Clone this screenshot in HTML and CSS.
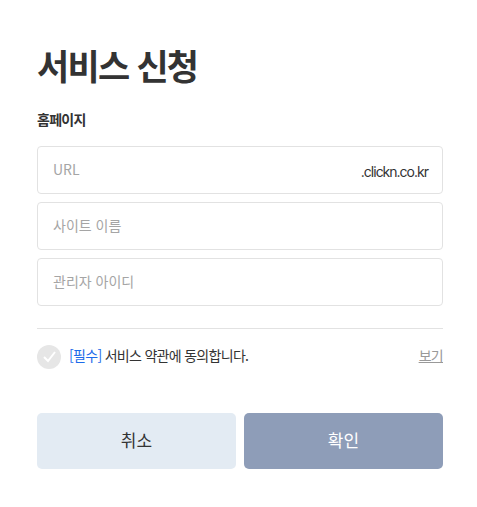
FILE: index.html
```html
<!DOCTYPE html>
<html lang="ko">
<head>
<meta charset="utf-8">
<meta name="viewport" content="width=device-width, initial-scale=1">
<title>서비스 신청</title>
<link rel="stylesheet" href="styles.css">
</head>
<body>
<main class="page">
  <h1 class="title">서비스 신청</h1>
  <form class="form">
    <h2 class="label">홈페이지</h2>
    <div class="fields">
      <label class="field">
        <input class="field-input" type="text" placeholder="URL" aria-label="URL">
        <span class="suffix">.clickn.co.kr</span>
      </label>
      <label class="field">
        <input class="field-input" type="text" placeholder="사이트 이름" aria-label="사이트 이름">
      </label>
      <label class="field">
        <input class="field-input" type="text" placeholder="관리자 아이디" aria-label="관리자 아이디">
      </label>
    </div>
    <div class="terms">
      <label class="agree">
        <span class="check">
          <input class="check-input" type="checkbox">
          <svg class="check-icon" viewBox="0 0 24 24" aria-hidden="true"><path d="M7 12l4 4 7-9"/></svg>
        </span>
        <span class="terms-text"><span class="required">[필수]</span> 서비스 약관에 동의합니다.</span>
      </label>
      <a class="view terms-text" href="#">보기</a>
    </div>
    <div class="actions">
      <button class="button cancel" type="button">취소</button>
      <button class="button confirm" type="submit">확인</button>
    </div>
  </form>
</main>
</body>
</html>
```
FILE: styles.css
```css
* {
  box-sizing: border-box;
}

body {
  margin: 0;
  background: #fff;
  color: #333;
  font-family: "Noto Sans CJK KR", sans-serif;
  font-size: 14px;
  letter-spacing: -0.05em;
}

.page {
  padding: 40px 34px 38px 37px;
}

.title {
  margin: 0 0 19px;
  font-size: 35px;
  line-height: 50px;
  letter-spacing: -0.05em;
}

.label {
  margin: 0 0 17px;
  font-size: 14px;
  line-height: 20px;
}

.fields {
  display: grid;
  gap: 8px;
}

.field {
  display: flex;
  align-items: center;
  height: 48px;
  padding: 0 14px 0 15px;
  border: 1px solid #e2e2e2;
  border-radius: 4px;
}

.field-input {
  flex: 1;
  min-width: 0;
  padding: 0 0 2px;
  border: 0;
  outline: 0;
  background: none;
  color: inherit;
  font: inherit;
  letter-spacing: 0;
}

.field-input::placeholder {
  color: #a5a5a5;
}

.suffix {
  padding-top: 2px;
  font-family: Inter, sans-serif;
  letter-spacing: -1px;
}

.terms {
  display: flex;
  align-items: center;
  justify-content: space-between;
  margin-top: 22px;
  padding-top: 16px;
  border-top: 1px solid #e2e2e2;
}

.terms-text {
  padding-bottom: 4px;
  line-height: 20px;
}

.agree {
  display: flex;
  align-items: center;
  gap: 8px;
}

.check {
  display: grid;
  width: 24px;
  height: 24px;
}

.check-input,
.check-icon {
  grid-area: 1 / 1;
  width: 24px;
  height: 24px;
  margin: 0;
}

.check-input {
  appearance: none;
  border-radius: 50%;
  background: #e6e6e6;
}

.check-input:checked {
  background: #1c6bea;
}

.check-icon {
  fill: none;
  stroke: #fff;
  stroke-width: 2;
  pointer-events: none;
}

.required {
  color: #1c6bea;
}

.view {
  color: #999;
}

.actions {
  display: grid;
  grid-template-columns: 1fr 1fr;
  gap: 8px;
  margin-top: 44px;
}

.button {
  height: 56px;
  padding: 0 0 4px;
  border: 0;
  border-radius: 5px;
  font: inherit;
  font-size: 17px;
}

.cancel {
  background: #e3ebf3;
  color: #333;
}

.confirm {
  background: #8e9db8;
  color: #fff;
}
```
